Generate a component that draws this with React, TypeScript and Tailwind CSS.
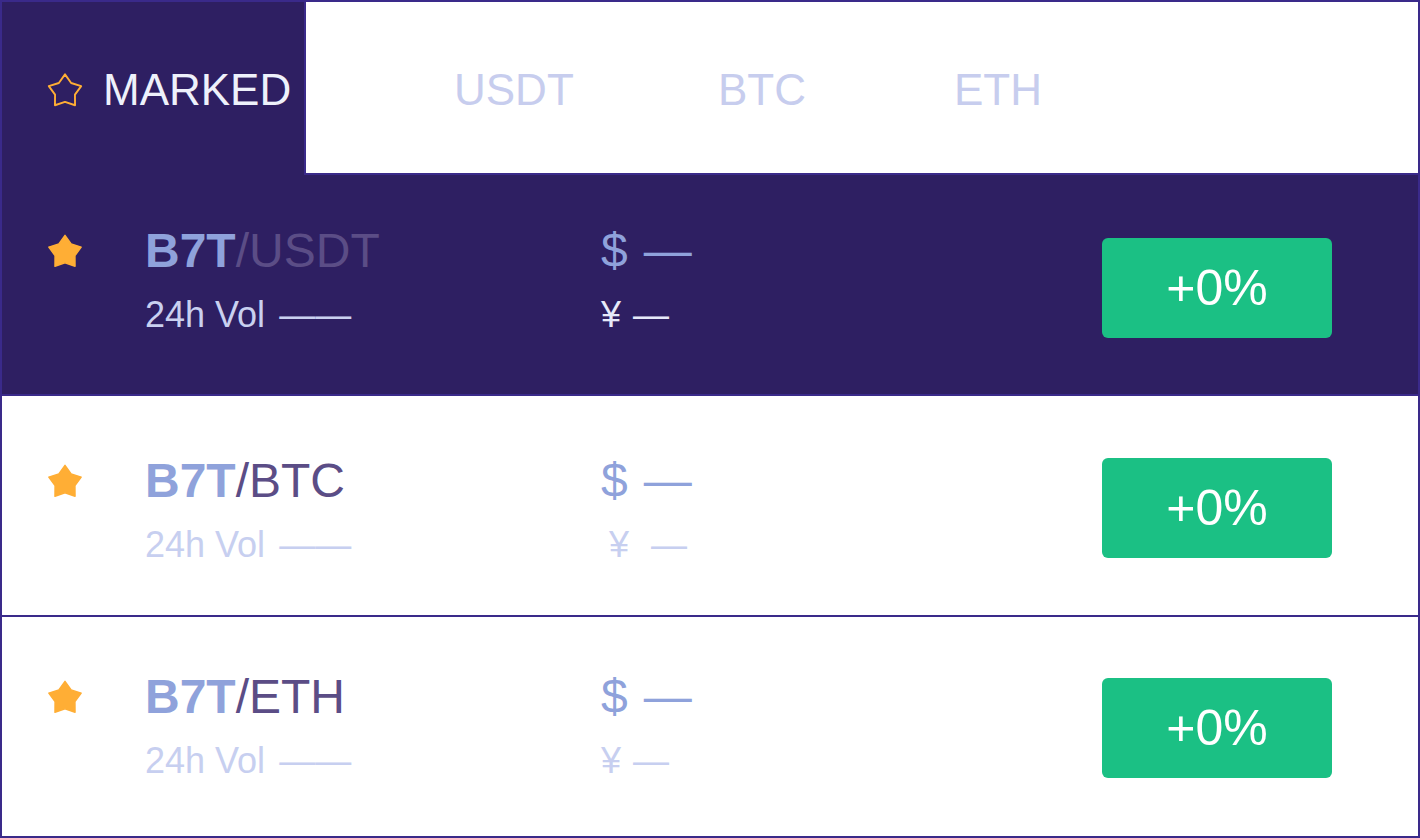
function Star({ filled }: { filled?: boolean }) {
  return (
    <svg width="36" height="36" viewBox="-1 -1 38 38">
      <polygon
        points="18,1.5 24.5,10.6 35.1,13.9 28.5,22.9 28.6,34.1 18,30.5 7.4,34.1 7.5,22.9 0.9,13.9 11.5,10.6"
        fill={filled ? "#ffae35" : "none"}
        stroke="#ffae35"
        strokeWidth={filled ? 1.5 : 2}
        strokeLinejoin="round"
      />
    </svg>
  );
}

type Row = { quote: string; dark?: boolean; shift: string; btn: string; yenPad: string; yenGap: string };

const rows: Row[] = [
  { quote: "USDT", dark: true, shift: "pt-[52px]", btn: "mt-[63px]", yenPad: "", yenGap: "ml-[12px]" },
  { quote: "BTC", shift: "pt-[61px]", btn: "mt-[62px]", yenPad: "pl-[8px]", yenGap: "ml-[22px]" },
  { quote: "ETH", shift: "pt-[56px]", btn: "mt-[61px]", yenPad: "", yenGap: "ml-[12px]" },
];

function MarketRow({ row }: { row: Row }) {
  return (
    <div className={`flex h-[219px] ${row.dark ? "bg-[#2e1f62]" : "bg-white"}`}>
      <div className={`w-[143px] pl-[45px] ${row.shift}`}>
        <div className="h-[48px] flex items-center">
          <Star filled />
        </div>
      </div>
      <div className={`w-[456px] flex flex-col ${row.shift}`}>
        <div className="h-[48px] leading-none text-[48px] whitespace-nowrap">
          <span className="font-bold text-[#8fa2db]">B7T</span>
          <span className="text-[#5b4d86]">/{row.quote}</span>
        </div>
        <div className={`mt-[22px] h-[36px] leading-none text-[36px] whitespace-nowrap ${row.dark ? "text-[#c9d0f0]" : "text-[#c7cff0]"}`}>
          24h Vol<span className="ml-[14px]">——</span>
        </div>
      </div>
      <div className={`flex-1 flex flex-col ${row.shift}`}>
        <div className="h-[48px] leading-none text-[48px] text-[#8fa2db] whitespace-nowrap">
          $<span className="ml-[16px]">—</span>
        </div>
        <div className={`mt-[22px] h-[36px] leading-none text-[36px] whitespace-nowrap ${row.yenPad} ${row.dark ? "text-[#e6e9f9]" : "text-[#c7cff0]"}`}>
          ¥<span className={row.yenGap}>—</span>
        </div>
      </div>
      <div className={`${row.btn} mr-[86px] w-[230px] h-[100px] rounded-md bg-[#1bc084] flex items-center justify-center text-white text-[50px] leading-none`}>
        +0%
      </div>
    </div>
  );
}

export default function App() {
  return (
    <div className="w-[1420px] h-[838px] border-2 border-[#3a2a8a] bg-white flex flex-col font-['Liberation_Sans',Arial,sans-serif]">
      <div className="flex h-[173px]">
        <div className="w-[302px] h-full bg-[#2e1f62] flex items-center pl-[45px] pt-[3px]">
          <Star />
          <span className="ml-[20px] text-[44px] leading-none text-[#eef1fb]">MARKED</span>
        </div>
        <div className="flex-1 h-full border-l-2 border-b-2 border-[#3a2a8a] flex items-center pl-[148px] pt-[4px] text-[44px] leading-none text-[#c7cdee]">
          <span className="w-[264px]">USDT</span>
          <span className="w-[236px]">BTC</span>
          <span>ETH</span>
        </div>
      </div>
      <MarketRow row={rows[0]} />
      <div className="h-[2px] bg-[#3a2a8a]" />
      <MarketRow row={rows[1]} />
      <div className="h-[2px] bg-[#3a2a8a]" />
      <MarketRow row={rows[2]} />
    </div>
  );
}
